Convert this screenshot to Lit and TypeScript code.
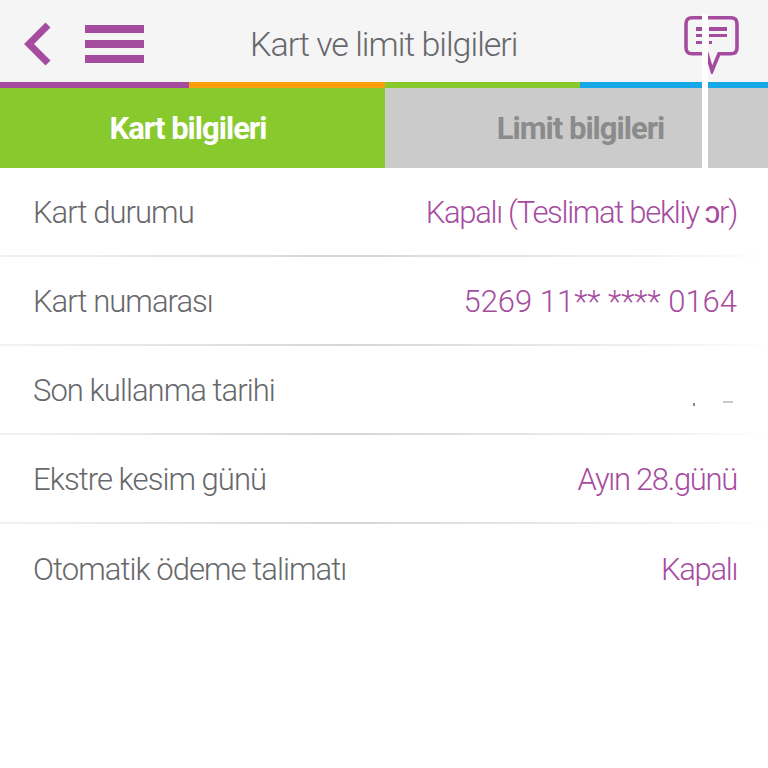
import { LitElement, html, css, svg } from 'lit';
import { customElement } from 'lit/decorators.js';

const rows = [
  { label: 'Kart durumu', value: 'Kapalı (Teslimat bekliy ɔr)' },
  { label: 'Kart numarası', value: '5269 11** **** 0164', num: true },
  { label: 'Son kullanma tarihi', value: '' },
  { label: 'Ekstre kesim günü', value: 'Ayın 28.günü' },
  { label: 'Otomatik ödeme talimatı', value: 'Kapalı' },
];

const chatIcon = svg`
  <path d="M10 3.800h39q6 0 6 6v24q0 6-6 6H37l-7 17-5-17H10q-6 0-6-6V9.800q0-6 6-6z" fill="none" stroke="#a64c9f" stroke-width="3.600"/>
  <path d="M14 13h7v4h-7zM27 13h18v4H27zM14 20h7v3h-7zM27 20h18v3H27zM14 27h7v3h-7zM27 27h3v3h-3z" fill="#a64c9f"/>`;

@customElement('app-root')
export class AppRoot extends LitElement {
  static override styles = css`
    :host {
      display: block;
      position: relative;
      width: 768px;
      height: 768px;
      overflow: hidden;
      background: #fff;
      font-family: Roboto, "Liberation Sans", sans-serif;
    }

    .header {
      display: flex;
      align-items: center;
      box-sizing: border-box;
      height: 82px;
      padding: 6px 0 0 23px;
      background: #f5f5f6;
    }

    .back {
      width: 29px;
      height: 46px;
    }

    .menu {
      display: flex;
      flex-direction: column;
      gap: 7.500px;
      width: 59px;
      margin-left: 33px;
    }

    .menu span {
      height: 7.500px;
      background: #a64c9f;
    }

    .title {
      margin-left: 106px;
      font-size: 34px;
      font-weight: 300;
      letter-spacing: -1px;
      color: #66686b;
      white-space: nowrap;
    }

    .stripe {
      display: grid;
      grid-template-columns: 189px 196px 195px 188px;
      height: 6px;
    }

    .tabs {
      display: grid;
      grid-template-columns: 385px 383px;
      height: 80px;
    }

    .tab {
      display: flex;
      align-items: center;
      justify-content: center;
      font-size: 31px;
      font-weight: 700;
      letter-spacing: -1px;
    }

    .tab.on {
      padding-right: 9px;
      background: #88c92e;
      color: #fff;
    }

    .tab.off {
      padding-left: 8px;
      background: #cbcbcb;
      color: #8b8b8b;
    }

    .row {
      display: flex;
      align-items: center;
      justify-content: space-between;
      box-sizing: border-box;
      height: 89px;
      padding: 2px 31px 0 33px;
      font-size: 31px;
      font-weight: 300;
      letter-spacing: -0.950px;
      border-bottom: 2px solid;
      border-image: linear-gradient(90deg, #f2f2f2, #d6d6d6 45%, #f4f4f4 90%, #fff) 1;
    }

    .row:last-child {
      border-bottom: none;
    }

    .label {
      color: #66686b;
    }

    .value {
      color: #a64c9f;
      letter-spacing: -1.300px;
    }

    .value.num {
      letter-spacing: 0;
    }

    .gap {
      position: absolute;
      left: 702px;
      top: 14px;
      width: 6px;
      height: 154px;
      background: #fff;
    }

    .chat {
      position: absolute;
      left: 682px;
      top: 14px;
      width: 60px;
      height: 60px;
    }

    .speck {
      position: absolute;
      height: 2px;
      background: #8a8a8a;
    }

    .speck.a {
      left: 693px;
      top: 403px;
      width: 2px;
      height: 3px;
    }

    .speck.b {
      left: 723px;
      top: 401px;
      width: 10px;
      background: #c9c9c9;
    }
  `;

  override render() {
    return html`
      <div class="header">
        <svg class="back" viewBox="0 0 29 46">
          <path d="M25 4 L6 23 L25 42" fill="none" stroke="#a64c9f" stroke-width="7"/>
        </svg>
        <div class="menu"><span></span><span></span><span></span></div>
        <div class="title">Kart ve limit bilgileri</div>
      </div>
      <div class="stripe">
        <div style="background:#a64c9f"></div>
        <div style="background:#fb9f0d"></div>
        <div style="background:#88c92e"></div>
        <div style="background:#18a7e6"></div>
      </div>
      <div class="tabs">
        <div class="tab on">Kart bilgileri</div>
        <div class="tab off">Limit bilgileri</div>
      </div>
      <div class="list">
        ${rows.map(r => html`
          <div class="row">
            <span class="label">${r.label}</span>
            <span class="value ${r.num ? 'num' : ''}">${r.value}</span>
          </div>
        `)}
      </div>
      <svg class="chat" viewBox="0 0 60 60">${chatIcon}</svg>
      <div class="gap"></div>
      <div class="speck a"></div>
      <div class="speck b"></div>
    `;
  }
}
